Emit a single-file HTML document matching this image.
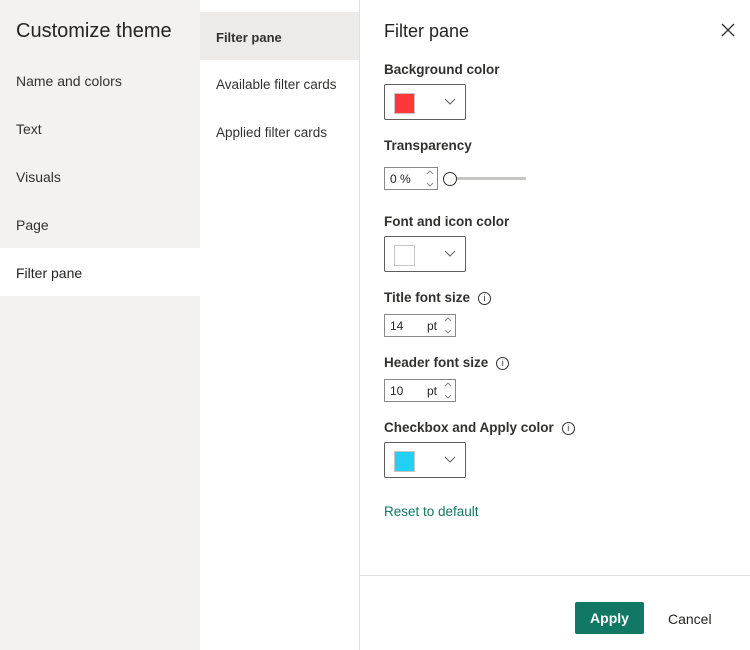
<!DOCTYPE html>
<html><head><style>
*{margin:0;padding:0;box-sizing:border-box}
body{width:750px;height:650px;font-family:"Liberation Sans",sans-serif;color:#252423;background:#fff;position:relative;overflow:hidden}
.abs{position:absolute}
.left{left:0;top:0;width:200px;height:650px;background:#f3f2f1}
.mid{left:200px;top:0;width:160px;height:650px;background:#fff;border-right:1px solid #e1dfdd}
.nav{position:absolute;left:16px;font-size:14px;color:#323130}
.lab{position:absolute;left:384px;font-size:13.5px;font-weight:bold;color:#323130}
.sw{position:absolute;left:384px;width:82px;height:36px;border:1px solid #605e5c;border-radius:2px}
.sw i{position:absolute;left:9px;top:8px;width:21px;height:21px;border:1px solid #c8c6c4}
.sw svg{position:absolute;left:59px;top:13px}
.num{position:absolute;left:384px;width:72px;height:23px;border:1px solid #8a8886;font-size:12px;padding:4px 5px}
.info{display:inline-block;width:13px;height:13px;border:1px solid #323130;border-radius:50%;font-size:9px;text-align:center;line-height:11px;margin-left:8px;font-weight:normal;vertical-align:1px}
</style></head><body>
<div class="abs left"></div>
<div class="abs" style="left:0;top:248px;width:200px;height:48px;background:#fff"></div>
<div class="abs" style="left:16px;top:20px;font-size:20px;color:#252423">Customize theme</div>
<div class="nav" style="top:73px">Name and colors</div>
<div class="nav" style="top:121px">Text</div>
<div class="nav" style="top:169px">Visuals</div>
<div class="nav" style="top:217px">Page</div>
<div class="nav" style="top:265px;color:#252423">Filter pane</div>
<div class="abs mid"></div>
<div class="abs" style="left:200px;top:12px;width:159px;height:48px;background:#edebe9"></div>
<div class="nav" style="left:216px;top:30px;font-size:13px;font-weight:bold">Filter pane</div>
<div class="nav" style="left:216px;top:77px;font-size:13.5px">Available filter cards</div>
<div class="nav" style="left:216px;top:125px;font-size:13.5px">Applied filter cards</div>

<div class="abs" style="left:384px;top:21px;font-size:18px;color:#252423">Filter pane</div>
<svg class="abs" style="left:721px;top:23px" width="14" height="14"><path d="M1 1L13 13M13 1L1 13" stroke="#323130" stroke-width="1.3"/></svg>

<div class="lab" style="top:62px">Background color</div>
<div class="sw" style="top:84px"><i style="background:#fd3838"></i><svg width="12" height="7"><path d="M1 1L6 6L11 1" stroke="#605e5c" fill="none"/></svg></div>

<div class="lab" style="top:138px">Transparency</div>
<div class="num" style="top:167px;width:54px">0 %</div>
<svg class="abs" style="left:424px;top:167px" width="12" height="23"><path d="M3 7L6 4L9 7M3 16L6 19L9 16" stroke="#8a8886" fill="none"/></svg>
<div class="abs" style="left:450px;top:177px;width:76px;height:3px;background:#c8c6c4"></div>
<div class="abs" style="left:443px;top:172px;width:14px;height:14px;border:1.5px solid #323130;border-radius:50%;background:#fff"></div>

<div class="lab" style="top:214px">Font and icon color</div>
<div class="sw" style="top:236px"><i style="background:#fff"></i><svg width="12" height="7"><path d="M1 1L6 6L11 1" stroke="#605e5c" fill="none"/></svg></div>

<div class="lab" style="top:290px">Title font size<span class="info">i</span></div>
<div class="num" style="top:314px">14<span style="position:absolute;left:42px">pt</span></div>
<svg class="abs" style="left:442px;top:314px" width="12" height="23"><path d="M3 7L6 4L9 7M3 16L6 19L9 16" stroke="#8a8886" fill="none"/></svg>

<div class="lab" style="top:355px">Header font size<span class="info">i</span></div>
<div class="num" style="top:379px">10<span style="position:absolute;left:42px">pt</span></div>
<svg class="abs" style="left:442px;top:379px" width="12" height="23"><path d="M3 7L6 4L9 7M3 16L6 19L9 16" stroke="#8a8886" fill="none"/></svg>

<div class="lab" style="top:420px">Checkbox and Apply color<span class="info">i</span></div>
<div class="sw" style="top:442px"><i style="background:#22d0f3"></i><svg width="12" height="7"><path d="M1 1L6 6L11 1" stroke="#605e5c" fill="none"/></svg></div>

<div class="abs" style="left:384px;top:504px;font-size:13.5px;color:#117865">Reset to default</div>
<div class="abs" style="left:360px;top:575px;width:390px;height:1px;background:#e1dfdd"></div>
<div class="abs" style="left:575px;top:602px;width:69px;height:32px;background:#117865;border-radius:2px;color:#fff;font-weight:bold;font-size:14px;text-align:center;line-height:32px">Apply</div>
<div class="abs" style="left:668px;top:611px;font-size:14px;color:#252423">Cancel</div>
</body></html>
